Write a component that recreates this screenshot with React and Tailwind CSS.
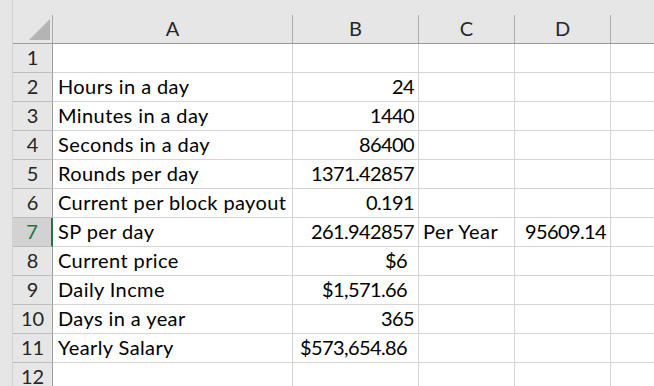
const cols = [
  { key: "A", w: "w-[240px]" },
  { key: "B", w: "w-[126px]" },
  { key: "C", w: "w-[96px]" },
  { key: "D", w: "w-[96px]" },
];

// [label, value, valueIsCurrency, C, D]
const rows = [
  ["", "", false, "", ""],
  ["Hours in a day", "24", false, "", ""],
  ["Minutes in a day", "1440", false, "", ""],
  ["Seconds in a day", "86400", false, "", ""],
  ["Rounds per day", "1371.42857", false, "", ""],
  ["Current per block payout", "0.191", false, "", ""],
  ["SP per day", "261.942857", false, "Per Year", "95609.14"],
  ["Current price", "$6", true, "", ""],
  ["Daily Incme", "$1,571.66", true, "", ""],
  ["Days in a year", "365", false, "", ""],
  ["Yearly Salary", "$573,654.86", true, "", ""],
  ["", "", false, "", ""],
];

const font = { fontFamily: "Lato, 'Open Sans', sans-serif" };

export default function App() {
  return (
    <div
      className="w-[654px] h-[386px] overflow-hidden bg-[#e6e6e6] flex text-[20px] leading-none text-black"
      style={font}
    >
      <div className="w-[13px] shrink-0 border-r border-[#d0d0d0]" />
      <div className="flex flex-col flex-1 min-w-0">
        <div className="h-[15px] shrink-0" />
        {/* column headers */}
        <div className="flex h-[29px] shrink-0 border-b border-[#9b9b9b]">
          <div className="w-[40px] shrink-0 relative border-r border-[#ababab]">
            <svg className="absolute left-[16px] top-[4px]" width="21" height="21" viewBox="0 0 21 21">
              <polygon points="21,0 21,21 0,21" fill="#b4b4b4" />
            </svg>
          </div>
          {cols.map((c) => (
            <div
              key={c.key}
              className={`${c.w} shrink-0 border-r border-[#ababab] flex items-end justify-center pb-[5px] text-[#262626]`}
            >
              {c.key}
            </div>
          ))}
          <div className="flex-1" />
        </div>
        {/* data rows */}
        {rows.map((r, i) => {
          const n = i + 1;
          const sel = n === 7;
          return (
            <div key={n} className="flex h-[29px] shrink-0">
              <div
                className={`w-[40px] shrink-0 flex items-end justify-center pb-[5px] border-b ${
                  sel
                    ? "bg-[#d2d2d2] text-[#217346] border-r-2 border-r-[#217346] border-b-[#bdbdbd]"
                    : "text-[#262626] border-r border-r-[#9e9e9e] border-b-[#bdbdbd]"
                }`}
              >
                {n}
              </div>
              <div className="w-[240px] shrink-0 bg-white border-r border-b border-[#d4d4d4] flex items-end pl-[5px] pb-[5px] whitespace-nowrap tracking-[0.4px]">
                {r[0]}
              </div>
              <div
                className={`w-[126px] shrink-0 bg-white border-r border-b border-[#d4d4d4] flex items-end justify-end pb-[5px] whitespace-nowrap tracking-[-0.6px] ${
                  r[2] ? "pr-[11px]" : "pr-[4px]"
                }`}
              >
                {r[1]}
              </div>
              <div className="w-[96px] shrink-0 bg-white border-r border-b border-[#d4d4d4] flex items-end pl-[4px] pb-[5px] whitespace-nowrap tracking-[0.5px]">
                {r[3]}
              </div>
              <div className="w-[96px] shrink-0 bg-white border-r border-b border-[#d4d4d4] flex items-end justify-end pr-[4px] pb-[5px] whitespace-nowrap tracking-[-0.6px]">
                {r[4]}
              </div>
              <div className="flex-1 bg-white border-b border-[#d4d4d4]" />
            </div>
          );
        })}
      </div>
    </div>
  );
}
